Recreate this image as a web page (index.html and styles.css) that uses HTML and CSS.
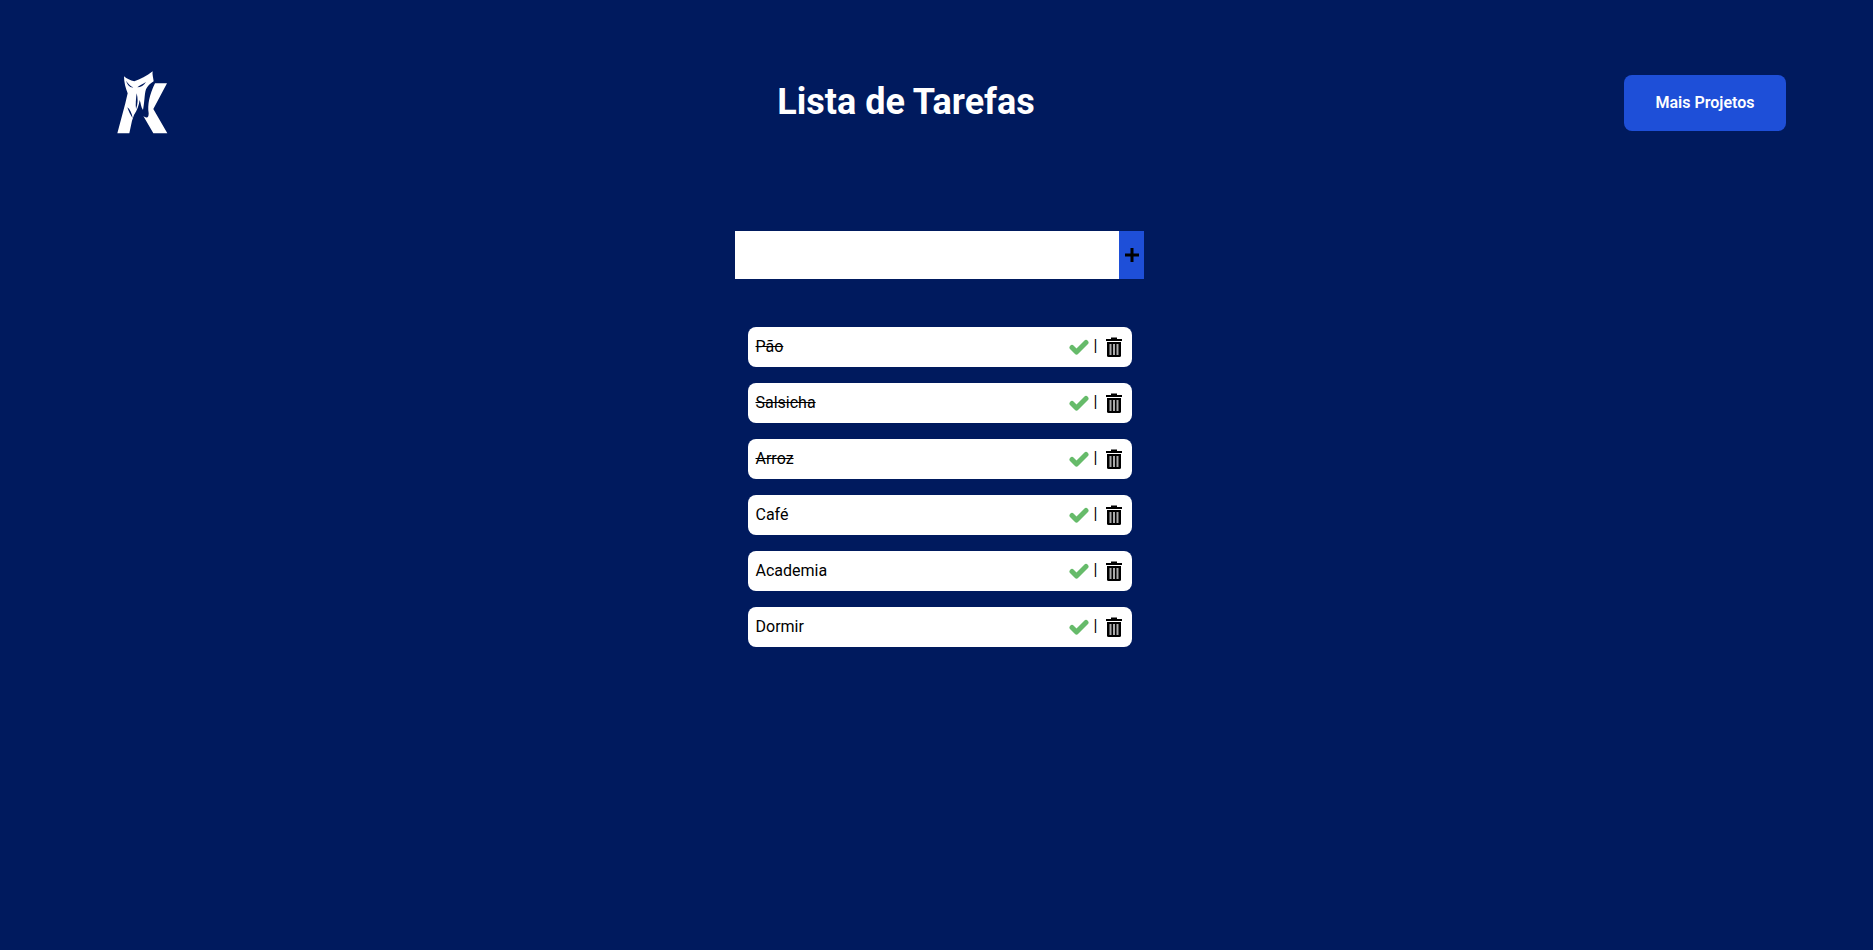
FILE: index.html
```html
<!DOCTYPE html>
<html lang="pt-BR">

<head>
    <meta charset="UTF-8">
    <meta name="viewport" content="width=device-width, initial-scale=1.0">
    <title>Lista de Tarefas</title>
    <link rel="stylesheet" href="styles.css">
</head>

<body>
    <header class="top">
        <a class="logo" href="#">
            <svg class="logo-img" viewBox="-9 54 303 210">
                <path fill="#fff" d="M82 250 L106 160 L113 130 C107 115 102 98 102 79 C110 86 121 92 133 94 C150 88 171 78 188 64 C186 72 190 84 191 94 C182 100 175 105 170 114 C163 124 165 150 159 180 C152 170 153 160 149 150 C147 165 142 180 132 195 L126 212 L118 250 Z"/>
                <path fill="#fff" d="M195 100 L231 100 L190 177 L232 250 L190 250 L160 198 C170 205 176 205 176 190 C172 165 178 135 195 100 Z"/>
                <path fill="#001a5e" d="M108 92 C112 104 120 114 130 112 C122 110 115 102 108 92 Z"/>
                <path fill="#001a5e" d="M142 112 C148 106 158 102 168 96 C162 106 152 112 142 112 Z"/>
                <path fill="#001a5e" d="M112 172 C120 178 126 190 128 205 C122 195 116 185 112 172 Z"/>
                <path fill="#001a5e" d="M140 130 C144 145 144 160 138 178 C136 162 138 145 140 130 Z"/>
            </svg>
        </a>
        <h1 class="title">Lista de Tarefas</h1>
        <a class="more" href="#">Mais Projetos</a>
    </header>

    <main class="content">
        <form class="add-form">
            <input class="add-input" type="text">
            <button class="add-btn" type="button">
                <svg class="plus-icon" viewBox="0 0 14 14"><path d="M5.500 0h3v5.500H14v3H8.500V14h-3V8.500H0v-3h5.500z"/></svg>
            </button>
        </form>

        <ul class="list">
            <li class="item done">
                <span class="item-name">Pão</span>
                <span class="actions">
                    <svg class="check" viewBox="0 0 20 16"><path d="M3 8.500 L7.500 13 L17 3.500"/></svg>
                    <span class="sep">|</span>
                    <svg class="trash" viewBox="0 0 16 20"><path d="M0 2h5V.5h6V2h5v2H0z"/><path d="M1 5h14v13.500a1.500 1.500 0 0 1-1.500 1.500h-11A1.500 1.500 0 0 1 1 18.500z"/><path class="slat" d="M3.500 7h2v11h-2zM7 7h2v11H7zM10.500 7h2v11h-2z"/></svg>
                </span>
            </li>
            <li class="item done">
                <span class="item-name">Salsicha</span>
                <span class="actions">
                    <svg class="check" viewBox="0 0 20 16"><path d="M3 8.500 L7.500 13 L17 3.500"/></svg>
                    <span class="sep">|</span>
                    <svg class="trash" viewBox="0 0 16 20"><path d="M0 2h5V.5h6V2h5v2H0z"/><path d="M1 5h14v13.500a1.500 1.500 0 0 1-1.500 1.500h-11A1.500 1.500 0 0 1 1 18.500z"/><path class="slat" d="M3.500 7h2v11h-2zM7 7h2v11H7zM10.500 7h2v11h-2z"/></svg>
                </span>
            </li>
            <li class="item done">
                <span class="item-name">Arroz</span>
                <span class="actions">
                    <svg class="check" viewBox="0 0 20 16"><path d="M3 8.500 L7.500 13 L17 3.500"/></svg>
                    <span class="sep">|</span>
                    <svg class="trash" viewBox="0 0 16 20"><path d="M0 2h5V.5h6V2h5v2H0z"/><path d="M1 5h14v13.500a1.500 1.500 0 0 1-1.500 1.500h-11A1.500 1.500 0 0 1 1 18.500z"/><path class="slat" d="M3.500 7h2v11h-2zM7 7h2v11H7zM10.500 7h2v11h-2z"/></svg>
                </span>
            </li>
            <li class="item">
                <span class="item-name">Café</span>
                <span class="actions">
                    <svg class="check" viewBox="0 0 20 16"><path d="M3 8.500 L7.500 13 L17 3.500"/></svg>
                    <span class="sep">|</span>
                    <svg class="trash" viewBox="0 0 16 20"><path d="M0 2h5V.5h6V2h5v2H0z"/><path d="M1 5h14v13.500a1.500 1.500 0 0 1-1.500 1.500h-11A1.500 1.500 0 0 1 1 18.500z"/><path class="slat" d="M3.500 7h2v11h-2zM7 7h2v11H7zM10.500 7h2v11h-2z"/></svg>
                </span>
            </li>
            <li class="item">
                <span class="item-name">Academia</span>
                <span class="actions">
                    <svg class="check" viewBox="0 0 20 16"><path d="M3 8.500 L7.500 13 L17 3.500"/></svg>
                    <span class="sep">|</span>
                    <svg class="trash" viewBox="0 0 16 20"><path d="M0 2h5V.5h6V2h5v2H0z"/><path d="M1 5h14v13.500a1.500 1.500 0 0 1-1.500 1.500h-11A1.500 1.500 0 0 1 1 18.500z"/><path class="slat" d="M3.500 7h2v11h-2zM7 7h2v11H7zM10.500 7h2v11h-2z"/></svg>
                </span>
            </li>
            <li class="item">
                <span class="item-name">Dormir</span>
                <span class="actions">
                    <svg class="check" viewBox="0 0 20 16"><path d="M3 8.500 L7.500 13 L17 3.500"/></svg>
                    <span class="sep">|</span>
                    <svg class="trash" viewBox="0 0 16 20"><path d="M0 2h5V.5h6V2h5v2H0z"/><path d="M1 5h14v13.500a1.500 1.500 0 0 1-1.500 1.500h-11A1.500 1.500 0 0 1 1 18.500z"/><path class="slat" d="M3.500 7h2v11h-2zM7 7h2v11H7zM10.500 7h2v11h-2z"/></svg>
                </span>
            </li>
        </ul>
    </main>
</body>

</html>
```

FILE: styles.css
```css
* {
    margin: 0;
    padding: 0;
    box-sizing: border-box;
}

html,
body {
    height: 100%;
}

body {
    background-color: #001a5e;
    font-family: Roboto, "Noto Sans", sans-serif;
    overflow: hidden;
}

ul,
li {
    list-style: none;
}

.top {
    display: flex;
    justify-content: space-between;
    align-items: center;
    height: 206px;
    padding: 0 87px;
}

.logo {
    display: block;
    width: 101px;
    height: 70px;
}

.logo-img {
    display: block;
    width: 101px;
    height: 70px;
}

.title {
    padding-bottom: 2px;
    color: #fff;
    font-size: 36px;
    font-weight: 700;
}

.more {
    display: flex;
    justify-content: center;
    align-items: center;
    width: 162px;
    height: 56px;
    padding-bottom: 2px;
    background-color: #1e4fd8;
    border-radius: 8px;
    color: #fff;
    font-size: 16px;
    font-weight: 600;
    text-decoration: none;
}

.content {
    display: flex;
    flex-direction: column;
    align-items: center;
    padding: 25px 0 0 6px;
}

.add-form {
    display: flex;
    width: 409px;
    height: 48px;
    margin-bottom: 48px;
}

.add-input {
    flex: 1;
    min-width: 0;
    background-color: #fff;
    border: none;
    outline: none;
}

.add-btn {
    display: flex;
    justify-content: center;
    align-items: center;
    width: 25px;
    background-color: #1e4fd8;
    border: none;
}

.plus-icon {
    width: 14px;
    height: 14px;
}

.list {
    display: flex;
    flex-direction: column;
    gap: 16px;
    width: 384px;
}

.item {
    display: flex;
    justify-content: space-between;
    align-items: center;
    height: 40px;
    padding: 0 10px 0 8px;
    background-color: #fff;
    border-radius: 8px;
    color: #000;
    font-size: 16px;
}

.item-name {
    padding-bottom: 2px;
}

.done .item-name {
    text-decoration: line-through;
}

.actions {
    display: flex;
    align-items: center;
}

.check {
    width: 20px;
    height: 16px;
    margin-bottom: 1px;
    fill: none;
    stroke: #66bb6a;
    stroke-width: 5px;
    stroke-linecap: round;
    stroke-linejoin: round;
}

.sep {
    margin: 0 8px 2px 5px;
    font-size: 16px;
    line-height: 1;
}

.trash {
    width: 16px;
    height: 20px;
}

.slat {
    fill: #aaa;
}
```
